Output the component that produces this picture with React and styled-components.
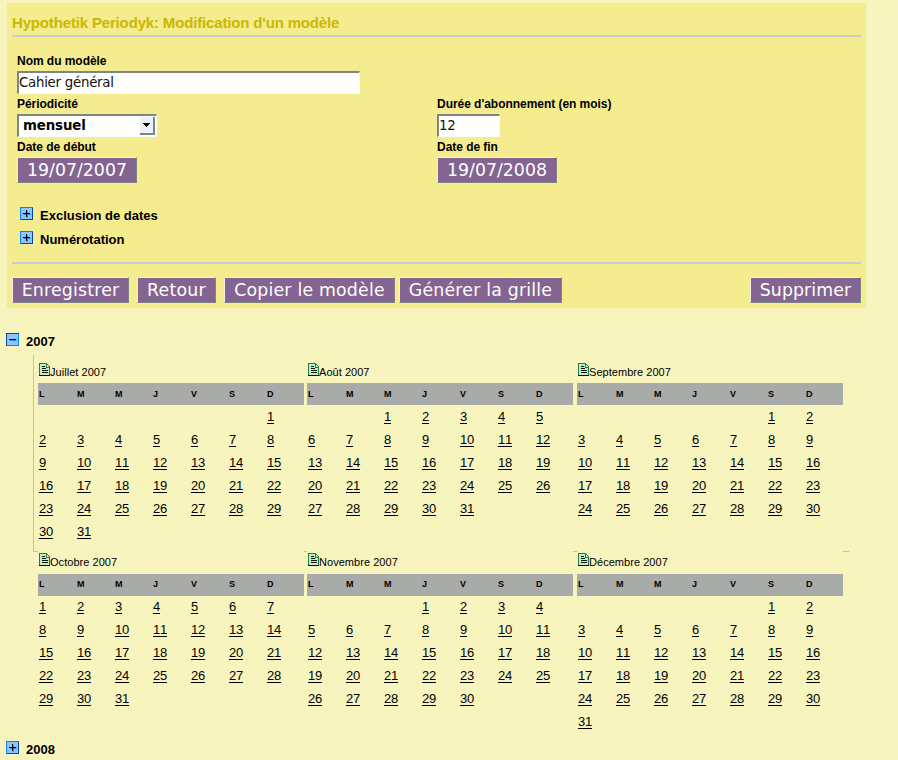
import React from "react";
import styled, { createGlobalStyle } from "styled-components";

const PAGE = "#f8f4be";

const Global = createGlobalStyle`
  *, *::before, *::after { box-sizing: border-box; }
  body {
    margin: 0;
    background: ${PAGE};
    color: #000;
    font-family: "Liberation Sans", Arial, sans-serif;
    overflow: hidden;
  }
`;

const Page = styled.main`
  height: 760px;
  padding-top: 3px;
  overflow: hidden;
`;

const Panel = styled.section`
  width: 859px;
  height: 305px;
  margin-left: 7px;
  padding: 0 5px;
  background: #f5eb8f;
`;

const Title = styled.h1`
  height: 34px;
  margin: 0;
  padding-top: 10px;
  border-bottom: 2px solid #ccc;
  color: #c8b900;
  font-size: 15px;
  line-height: 20px;
  letter-spacing: -0.16px;
  white-space: nowrap;
`;

const Form = styled.div`
  display: grid;
  grid-template-columns: 420px 1fr;
  grid-template-rows: 43px 43px 45px;
  margin-top: 14px;
  padding-left: 5px;
`;

const Field = styled.div`
  grid-column: ${(p) => (p.$wide ? "1 / -1" : "auto")};
`;

const Label = styled.label`
  display: block;
  height: 20px;
  padding-top: 2px;
  font-size: 12px;
  font-weight: bold;
  line-height: 16px;
  letter-spacing: -0.04px;
  white-space: nowrap;
`;

const TextInput = styled.input`
  display: block;
  width: ${(p) => p.$width}px;
  height: 23px;
  padding: 0 0 2px;
  border: 0 solid;
  border-width: 2px 1px 1px 2px;
  border-color: #7f8587 #f5feff #f5feff #7f8587;
  border-radius: 0;
  outline: 0;
  background: #fff;
  color: #111;
  font: 13.33px/18px "DejaVu Sans", sans-serif;
  letter-spacing: -0.25px;
`;

const SelectBox = styled.div`
  display: flex;
  align-items: flex-start;
  justify-content: space-between;
  width: 140px;
  height: 23px;
  padding-left: 4px;
  border: 0 solid;
  border-width: 2px 1px 1px 2px;
  border-color: #7f8587 #f5feff #f5feff #7f8587;
  background: #fff;
  font: bold 13.33px/19px "DejaVu Sans", sans-serif;
  letter-spacing: -0.1px;
`;

const SelectArrow = styled.span`
  display: flex;
  align-items: center;
  justify-content: center;
  width: 15px;
  height: 18px;
  margin: 1px 1px 0 0;
  border-right: 2px solid #7f8587;
  border-bottom: 2px solid #7f8587;
  background: #ecf2f5;
`;

const Button = styled.button`
  flex: none;
  display: block;
  width: ${(p) => p.$width}px;
  height: 26px;
  margin: 0 ${(p) => p.$gap || 0}px 0 0;
  padding: 0;
  border: 1px solid;
  border-color: #f4f0dc #7f8587 #7f8587 #f4f0dc;
  border-radius: 0;
  background: #846491;
  color: #fff;
  font: 17.33px/23px "DejaVu Sans", sans-serif;
  letter-spacing: ${(p) => p.$spacing || 0}px;
  white-space: nowrap;
`;

const Options = styled.div`
  display: grid;
  grid-auto-rows: 24px;
  margin-top: 24px;
  padding-left: 8px;
`;

const Toggle = styled.div`
  display: flex;
  gap: 7px;
  height: 20px;
  font-size: 13px;
  font-weight: bold;
  line-height: 20px;

  svg {
    margin-top: 1px;
  }
`;

const Actions = styled.div`
  display: flex;
  margin-top: 8px;
  padding-top: 13px;
  border-top: 2px solid #ccc;
`;

const Spacer = styled.span`
  flex: 1;
`;

const Years = styled.section`
  padding: 24px 0 0 6px;
`;

const YearBox = styled.div`
  width: 816px;
  height: 197px;
  margin: 3px 0 188px 27px;
  padding: 6px 0 0 4px;
  border-left: 1px solid #c0c0b4;
  border-bottom: 1px solid #c0c0b4;
`;

const Months = styled.div`
  display: grid;
  grid-template-columns: 269px 270px 266px;
  grid-auto-rows: 190.2px;
`;

const Month = styled.article`
  width: 266px;
  background: ${PAGE};
`;

const MonthTitle = styled.div`
  display: flex;
  height: 22.4px;
  padding: 2px 0 0 1px;
  font-size: 11px;
  line-height: 18px;
  letter-spacing: 0.04px;
`;

const WeekHead = styled.div`
  display: grid;
  grid-template-columns: repeat(7, 38px);
  height: 22px;
  padding: 0.3px 0 0 1px;
  background: #a9aba8;
  font-size: 9px;
  font-weight: bold;
  line-height: 21px;
`;

const Days = styled.div`
  display: grid;
  grid-template-columns: repeat(7, 38px);
  grid-auto-rows: 23px;
  padding-left: 1px;
`;

const Day = styled.a`
  grid-column-start: ${(p) => p.$column};
  justify-self: start;
  height: 18.7px;
  padding-top: 3.7px;
  border-bottom: 1px solid #000;
  font-size: 13px;
  font-kerning: none;
  line-height: 15px;
  letter-spacing: -0.23px;
`;

const IconSvg = styled.svg`
  flex: none;
  display: block;
`;

function ToggleIcon({ open }) {
  return (
    <IconSvg width="13" height="13" viewBox="0 0 13 13" shapeRendering="crispEdges">
      <rect width="13" height="13" fill={open ? "#0a4a8c" : "#0a84f0"} />
      <path d={open ? "M1 12H12V1H13V13H1Z" : "M1 12H12V1H13V13H1Z"} fill={open ? "#0a84f0" : "#0a4a8c"} />
      <rect x="1" y="1" width="11" height="11" fill="#8cc4ff" />
      <path d={open ? "M4 7H11V8H4Z" : "M4 7H11V8H4ZM7 4H8V11H7Z"} fill="#2a94f8" />
      <path d={open ? "M3 6H10V7H3Z" : "M3 6H10V7H3ZM6 3H7V10H6Z"} fill="#000" />
    </IconSvg>
  );
}

function PageIcon() {
  return (
    <IconSvg width="11" height="13" viewBox="0 0 11 13" shapeRendering="crispEdges">
      <path d="M0 0H8V1H9V2H10V3H11V13H0Z" fill="#267a3e" />
      <path d="M1 1H7V5H10V12H1Z" fill="#c3edc6" />
      <path d="M8 2H9V3H10V4H8Z" fill="#d8f5d8" />
      <path d="M3 3H6V4H3ZM3 5H7V6H3ZM3 7H9V8H3ZM3 9H9V10H3ZM0 12H11V13H0Z" fill="#07150b" />
    </IconSvg>
  );
}

const MONTHS = [
  ["Juillet 2007", 7, 31],
  ["Août 2007", 3, 31],
  ["Septembre 2007", 6, 30],
  ["Octobre 2007", 1, 31],
  ["Novembre 2007", 4, 30],
  ["Décembre 2007", 6, 31],
];

function Calendar({ name, first, count }) {
  return (
    <Month>
      <MonthTitle>
        <PageIcon />
        <span>{name}</span>
      </MonthTitle>
      <WeekHead>
        {["L", "M", "M", "J", "V", "S", "D"].map((d, i) => (
          <span key={i}>{d}</span>
        ))}
      </WeekHead>
      <Days>
        {Array.from({ length: count }, (_, i) => (
          <Day key={i} $column={i === 0 ? first : "auto"}>
            {i + 1}
          </Day>
        ))}
      </Days>
    </Month>
  );
}

export default function App() {
  return (
    <>
      <Global />
      <Page>
        <Panel>
          <Title>Hypothetik Periodyk: Modification d'un modèle</Title>
          <Form>
            <Field $wide>
              <Label>Nom du modèle</Label>
              <TextInput $width={343} defaultValue="Cahier général" />
            </Field>
            <Field>
              <Label>Périodicité</Label>
              <SelectBox>
                mensuel
                <SelectArrow>
                  <IconSvg width="9" height="5" viewBox="0 0 9 5" shapeRendering="crispEdges">
                    <path d="M1 0H8V1H7V2H6V3H5V4H4V3H3V2H2V1H1Z" />
                  </IconSvg>
                </SelectArrow>
              </SelectBox>
            </Field>
            <Field>
              <Label>Durée d'abonnement (en mois)</Label>
              <TextInput $width={63} defaultValue="12" />
            </Field>
            <Field>
              <Label>Date de début</Label>
              <Button $width={120}>19/07/2007</Button>
            </Field>
            <Field>
              <Label>Date de fin</Label>
              <Button $width={120}>19/07/2008</Button>
            </Field>
          </Form>
          <Options>
            <Toggle>
              <ToggleIcon />
              Exclusion de dates
            </Toggle>
            <Toggle>
              <ToggleIcon />
              Numérotation
            </Toggle>
          </Options>
          <Actions>
            <Button $width={117} $gap={8} $spacing={0.2}>Enregistrer</Button>
            <Button $width={79} $gap={8} $spacing={0.25}>Retour</Button>
            <Button $width={171} $gap={4} $spacing={0.2}>Copier le modèle</Button>
            <Button $width={163} $spacing={0.2}>Générer la grille</Button>
            <Spacer />
            <Button $width={111} $spacing={0.12}>Supprimer</Button>
          </Actions>
        </Panel>
        <Years>
          <Toggle>
            <ToggleIcon open />
            2007
          </Toggle>
          <YearBox>
            <Months>
              {MONTHS.map(([name, first, count]) => (
                <Calendar key={name} name={name} first={first} count={count} />
              ))}
            </Months>
          </YearBox>
          <Toggle>
            <ToggleIcon />
            2008
          </Toggle>
        </Years>
      </Page>
    </>
  );
}
